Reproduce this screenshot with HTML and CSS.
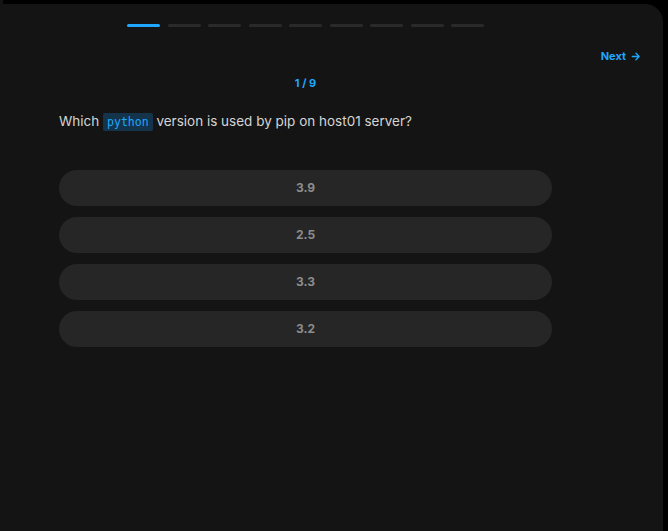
FILE: index.html
```html
<!DOCTYPE html>
<html>
<head>
<meta charset="utf-8">
<link rel="stylesheet" href="styles.css">
</head>
<body>
<div class="card">
  <div class="progress">
    <span class="seg active"></span><span class="seg"></span><span class="seg"></span><span class="seg"></span><span class="seg"></span><span class="seg"></span><span class="seg"></span><span class="seg"></span><span class="seg"></span>
  </div>
  <div class="nav">
    <button class="next">Next
      <svg width="11" height="11" viewBox="0 0 24 24" fill="none" stroke="currentColor" stroke-width="2.8" stroke-linecap="round" stroke-linejoin="round"><path d="M5 12h14M13 5l7 7-7 7"/></svg>
    </button>
  </div>
  <div class="main">
    <div class="count">1 / 9</div>
    <p class="question">Which <code>python</code> version is used by pip on host01 server?</p>
    <div class="options">
      <button class="opt">3.9</button>
      <button class="opt">2.5</button>
      <button class="opt">3.3</button>
      <button class="opt">3.2</button>
    </div>
  </div>
</div>
</body>
</html>
```
FILE: styles.css
```css
html, body {
  margin: 0;
  height: 100%;
}
body {
  background: linear-gradient(to right, #141414 3px, #000 3px);
  font-family: Inter, "Noto Sans", sans-serif;
  padding: 4px 5px 0 0;
  box-sizing: border-box;
}
.card {
  background: #141414;
  height: 100%;
  border-top-right-radius: 18px;
  padding: 20px 0 0 59px;
  box-sizing: border-box;
}
.progress {
  width: 493px;
  display: flex;
  justify-content: center;
  gap: 7.5px;
}
.seg {
  width: 33px;
  height: 3px;
  border-radius: 2px;
  background: #2a2a2a;
}
.seg.active {
  background: #1ea7fd;
}
.nav {
  display: flex;
  justify-content: flex-end;
  padding-right: 22px;
  margin-top: 22px;
  height: 14px;
}
.next {
  background: none;
  border: 0;
  padding: 0;
  color: #1ea7fd;
  font-family: inherit;
  font-weight: 700;
  font-size: 11px;
  display: flex;
  align-items: center;
  gap: 4px;
  line-height: 14px;
}
.main {
  width: 493px;
}
.count {
  margin-top: 13px;
  text-align: center;
  color: #1ea7fd;
  font-size: 11px;
  font-weight: 700;
  line-height: 14px;
}
.question {
  margin: 21px 0 0;
  color: #d4d4d4;
  font-size: 13.5px;
  line-height: 20px;
}
.question code {
  font-family: "DejaVu Sans Mono", "Liberation Mono", monospace;
  font-size: 11.5px;
  color: #1ea7fd;
  background: #14344b;
  padding: 2px 4px;
  border-radius: 2px;
}
.options {
  margin-top: 38px;
  display: flex;
  flex-direction: column;
  gap: 11px;
}
.opt {
  height: 36px;
  border: 0;
  border-radius: 18px;
  background: #262626;
  color: #8c8c8c;
  font-family: inherit;
  font-weight: 700;
  font-size: 12px;
  padding: 0 0 2px;
}
```
